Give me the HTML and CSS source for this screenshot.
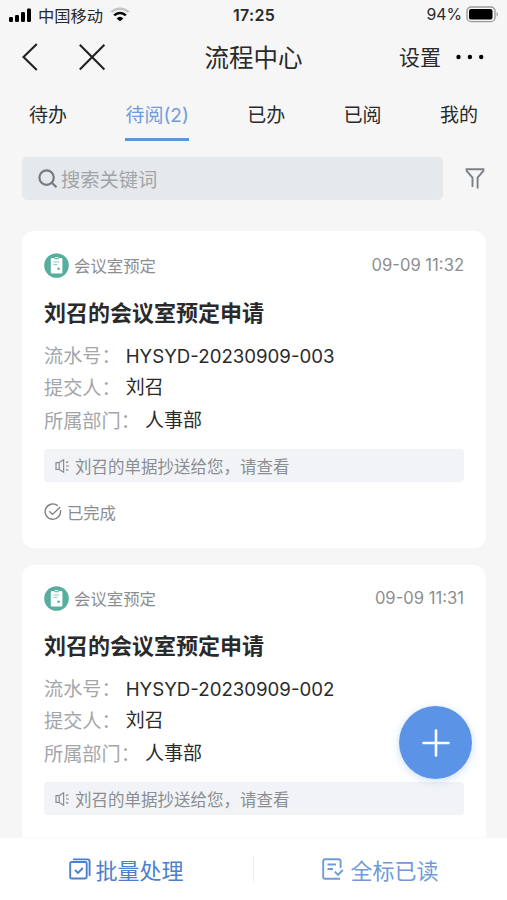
FILE: index.html
```html
<!DOCTYPE html>
<html lang="zh-CN">
<head>
  <meta charset="UTF-8" />
  <meta name="viewport" content="width=device-width, initial-scale=1.0" />
  <title>流程中心</title>
  <link rel="stylesheet" href="styles.css">
</head>

<body>
  <!-- Status Bar -->
  <div class="status-bar">
    <div class="carrier">
      <svg width="23" height="16" viewBox="0 0 23 16">
        <rect x="0" y="10" width="4" height="5" rx="1.2"/>
        <rect x="6" y="8" width="4" height="7" rx="1.2"/>
        <rect x="12" y="5" width="4" height="10" rx="1.2"/>
        <rect x="18" y="1.5" width="4" height="13.5" rx="1.2"/>
      </svg>
      <span class="carrier-name">中国移动</span>
      <svg class="wifi" width="20" height="15" viewBox="0 0 20 15" fill="none" stroke-width="2.5">
        <path d="M1.3 5.2a12.4 12.4 0 0 1 17.4 0" stroke="#c4c4c4"/>
        <path d="M4.2 8.4a8.3 8.3 0 0 1 11.6 0" stroke="#000"/>
        <path d="M10 14.3 6.6 11.4a5 5 0 0 1 6.8 0z" fill="#000"/>
      </svg>
    </div>
    <span class="clock">17:25</span>
    <div class="battery">
      <span>94%</span>
      <svg width="33" height="17" viewBox="0 0 33 17">
        <rect x="1" y="1" width="28" height="14.6" rx="4.2" fill="none" stroke="#9b9b9b" stroke-width="1.4"/>
        <rect x="3" y="3" width="23.5" height="10.6" rx="2.2"/>
        <path d="M30.6 6v4.6c1.7-.6 1.7-4 0-4.6z" fill="#9b9b9b"/>
      </svg>
    </div>
  </div>

  <!-- Navigation Bar -->
  <header class="nav">
    <div class="nav-left">
      <svg width="16" height="28" viewBox="0 0 16 28"><path d="M14.8 1 1.5 14l13.3 13"/></svg>
      <svg width="28" height="28" viewBox="0 0 28 28"><path d="M1.8 1.8l24.6 24.6M26.4 1.8 1.8 26.4"/></svg>
    </div>
    <h1>流程中心</h1>
    <div class="nav-right">
      <span>设置</span>
      <svg width="28" height="6" viewBox="0 0 28 6">
        <circle cx="2.5" cy="3" r="2.2"/>
        <circle cx="13.9" cy="3" r="2.2"/>
        <circle cx="25.2" cy="3" r="2.2"/>
      </svg>
    </div>
  </header>

  <nav class="tabs">
    <a class="tab">待办</a>
    <a class="tab active">待阅(2)</a>
    <a class="tab">已办</a>
    <a class="tab">已阅</a>
    <a class="tab">我的</a>
  </nav>

  <!-- Search -->
  <div class="search">
    <div class="search-box">
      <svg width="20" height="20" viewBox="0 0 20 20">
        <circle cx="8.6" cy="8.6" r="7.2"/>
        <path d="M13.8 13.8l4.7 4.5"/>
      </svg>
      <span>搜索关键词</span>
    </div>
    <svg class="filter" width="20" height="22" viewBox="0 0 20 22">
      <path d="M7.5 19.1V9.7L1.6 2.8V1.3h16.8v1.5l-5.8 6.9v10.8"/>
    </svg>
  </div>

  <!-- Process List -->
  <main class="list">
    <article class="card">
      <div class="card-head">
        <svg class="type-icon" width="25" height="25" viewBox="0 0 25 25">
          <circle cx="12.5" cy="12.5" r="12.3" fill="#56ae9f"/>
          <path d="M8 5h2.2l.6 1.3h3.6L15 5h2.200a1.200 1.200 0 0 1 1.200 1.200v13a1.200 1.200 0 0 1-1.200 1.200H8a1.200 1.200 0 0 1-1.200-1.200v-13A1.200 1.200 0 0 1 8 5z" fill="#fff"/>
          <path d="M11 4.600h3.200" stroke="#fff" stroke-width="1.2"/>
          <path d="M9.400 9h6M9.400 11.600h4" stroke="#8cc8be" stroke-width="1"/>
          <circle cx="14.6" cy="15.8" r="1.3" fill="#56ae9f"/>
        </svg>
        <span class="type">会议室预定</span>
        <time>09-09 11:32</time>
      </div>
      <h2>刘召的会议室预定申请</h2>
      <dl>
        <div><dt>流水号：</dt><dd class="serial">HYSYD-20230909-003</dd></div>
        <div><dt>提交人：</dt><dd>刘召</dd></div>
        <div><dt>所属部门：</dt><dd>人事部</dd></div>
      </dl>
      <p class="notice">
        <svg width="15" height="16" viewBox="0 0 15 16">
          <path d="M1 4.600h3.200L8.600 1.800v12.400l-4.400-2.800H1zM4.200 4.600v6.800M11 4.600l2.300-1M11 8h3M11 11.400l2.300 1"/>
        </svg>
        <span>刘召的单据抄送给您，请查看</span>
      </p>
      <div class="state">
        <svg width="18" height="18" viewBox="0 0 18 18">
          <path d="M16.400 7.200A7.700 7.700 0 1 1 13.600 2.600M5.200 8.200l3.300 3.200 7.700-7.300"/>
        </svg>
        <span>已完成</span>
      </div>
    </article>

    <article class="card">
      <div class="card-head">
        <svg class="type-icon" width="25" height="25" viewBox="0 0 25 25">
          <circle cx="12.5" cy="12.5" r="12.3" fill="#56ae9f"/>
          <path d="M8 5h2.200l.6 1.300h3.600L15 5h2.200a1.200 1.200 0 0 1 1.200 1.200v13a1.200 1.200 0 0 1-1.200 1.200H8a1.200 1.200 0 0 1-1.200-1.200v-13A1.200 1.200 0 0 1 8 5z" fill="#fff"/>
          <path d="M11 4.600h3.200" stroke="#fff" stroke-width="1.2"/>
          <path d="M9.400 9h6M9.400 11.600h4" stroke="#8cc8be" stroke-width="1"/>
          <circle cx="14.6" cy="15.8" r="1.3" fill="#56ae9f"/>
        </svg>
        <span class="type">会议室预定</span>
        <time>09-09 11:31</time>
      </div>
      <h2>刘召的会议室预定申请</h2>
      <dl>
        <div><dt>流水号：</dt><dd class="serial">HYSYD-20230909-002</dd></div>
        <div><dt>提交人：</dt><dd>刘召</dd></div>
        <div><dt>所属部门：</dt><dd>人事部</dd></div>
      </dl>
      <p class="notice">
        <svg width="15" height="16" viewBox="0 0 15 16">
          <path d="M1 4.600h3.200L8.600 1.800v12.400l-4.400-2.800H1zM4.200 4.600v6.800M11 4.600l2.300-1M11 8h3M11 11.400l2.300 1"/>
        </svg>
        <span>刘召的单据抄送给您，请查看</span>
      </p>
    </article>
  </main>

  <button class="add" aria-label="新建">
    <svg width="28" height="28" viewBox="0 0 28 28"><path d="M14 1.500v25M1.500 14h25"/></svg>
  </button>

  <!-- Bottom Actions -->
  <footer class="actions">
    <a class="action batch">
      <svg width="22" height="22" viewBox="0 0 22 22">
        <rect x="1.200" y="4" width="16.500" height="16.500" rx="1.500"/>
        <path d="M4 1.400h14.600a2 2 0 0 1 2 2V18M6 12l3 3 4.800-5"/>
      </svg>
      <span>批量处理</span>
    </a>
    <a class="action read">
      <svg width="22" height="22" viewBox="0 0 22 22">
        <path d="M18.600 10V3a1.800 1.800 0 0 0-1.800-1.800H3A1.800 1.800 0 0 0 1.200 3v16A1.800 1.800 0 0 0 3 20.800h15M5.500 6.500h8.500M5.500 11h5.500M12.800 13.600l3.200 3.200 4.800-4.800"/>
      </svg>
      <span>全标已读</span>
    </a>
  </footer>
</body>

</html>
```
FILE: styles.css
```css
:root {
  --bg: #f6f6f6;
  --blue: #5b94e6;
  --text: #2a2a2a;
  --gray: #8b8e91;
}

* {
  margin: 0;
  padding: 0;
  box-sizing: border-box;
}

body {
  display: flex;
  flex-direction: column;
  height: 900px;
  overflow: hidden;
  background: var(--bg);
  color: var(--text);
  font-family: Inter, "Noto Sans CJK SC", sans-serif;
}

svg {
  display: block;
  flex: none;
}

.status-bar {
  display: grid;
  grid-template-columns: 1fr auto 1fr;
  align-items: center;
  height: 30px;
  padding: 0 8px 1px 9px;
  font-size: 16px;
}

.carrier {
  display: flex;
  align-items: center;
}

.carrier-name {
  margin: 0 7px 0 6px;
  font-size: 16.3px;
}

.clock {
  font-weight: 600;
  letter-spacing: 0.3px;
}

.battery {
  display: flex;
  justify-content: flex-end;
  align-items: center;
  gap: 4px;
  font-size: 15.8px;
}

.nav {
  display: grid;
  grid-template-columns: 1fr auto 1fr;
  align-items: center;
  height: 56px;
  padding: 0 23px 2px 22px;
}

.nav-left {
  display: flex;
  align-items: center;
  gap: 40px;
  fill: none;
  stroke: #222;
  stroke-width: 2.1;
}

.nav h1 {
  padding: 0 0 2px 1px;
  font-size: 24.5px;
  font-weight: 400;
}

.nav-right {
  display: flex;
  justify-content: flex-end;
  align-items: center;
  gap: 15px;
  font-size: 21px;
}

.nav-right span {
  padding-bottom: 2px;
}

.tabs {
  display: flex;
  justify-content: space-between;
  height: 55px;
  padding: 0 29px;
  font-size: 19px;
  line-height: 59px;
}

.tab.active {
  color: #6f9bd8;
  border-bottom: 3px solid #6394d6;
}

.search {
  display: flex;
  align-items: center;
  gap: 22px;
  margin-top: 16px;
  padding: 0 22px;
}

.search-box {
  display: flex;
  flex: 1;
  align-items: center;
  gap: 3px;
  height: 43px;
  padding-left: 16px;
  border-radius: 5px;
  background: #e5e9ec;
  color: #a1a5a9;
  font-size: 19.3px;
}

.search-box svg {
  fill: none;
  stroke: #737b82;
  stroke-width: 2.2;
}

.filter {
  fill: none;
  stroke: #7d8185;
  stroke-width: 1.9;
}

.list {
  display: flex;
  flex: 1;
  flex-direction: column;
  gap: 17px;
  min-height: 0;
  margin-top: 31px;
  padding: 0 21.5px 0 22px;
  overflow: hidden;
}

.card {
  flex: none;
  height: 317px;
  padding: 22px 21.5px 0 22px;
  border-radius: 12px;
  background: #fff;
}

.card + .card {
  padding-top: 21px;
}

.card-head {
  display: flex;
  align-items: center;
  height: 24px;
  color: var(--gray);
  font-size: 16.4px;
}

.type {
  margin-left: 5px;
}

.card-head time {
  margin-left: auto;
  font-size: 16.6px;
}

.card h2 {
  margin-top: 20px;
  font-size: 22px;
  font-weight: 700;
  line-height: 32px;
}

.card dl {
  margin-top: 11px;
  font-size: 19.2px;
  line-height: 32.4px;
}

.card dl div {
  display: flex;
  gap: 5px;
}

.card dt {
  color: #a3a6a9;
}

.card dd {
  font-size: 19px;
}

.card .serial {
  font-size: 18.65px;
}

.notice {
  display: flex;
  align-items: center;
  gap: 5px;
  height: 33px;
  margin-top: 12px;
  padding-left: 11px;
  border-radius: 4px;
  background: #f1f3f6;
  color: var(--gray);
  font-size: 16.5px;
}

.notice svg {
  fill: none;
  stroke: #8b8e91;
  stroke-width: 1.2;
}

.state {
  display: flex;
  align-items: center;
  gap: 5px;
  height: 24px;
  margin-top: 18px;
  color: var(--gray);
  font-size: 16.3px;
}

.state svg {
  fill: none;
  stroke: #7d8083;
  stroke-width: 1.4;
}

.add {
  position: fixed;
  top: 706px;
  right: 35px;
  display: flex;
  justify-content: center;
  align-items: center;
  width: 73px;
  height: 73px;
  border: none;
  border-radius: 50%;
  background: var(--blue);
  box-shadow: 0 2px 9px rgba(91, 148, 230, 0.3);
}

.add svg {
  fill: none;
  stroke: #fff;
  stroke-width: 2.6;
  stroke-linecap: round;
}

.actions {
  display: flex;
  flex: none;
  align-items: center;
  height: 63px;
  border-top: 1px solid #f9f9f9;
  background: #fff;
  font-size: 22px;
}

.action {
  display: flex;
  flex: 1;
  justify-content: center;
  align-items: center;
  gap: 4px;
  height: 26px;
}

.action svg {
  fill: none;
  stroke: currentColor;
  stroke-width: 1.9;
}

.batch {
  border-right: 1px solid #eee;
  color: #4c7fd0;
}

.read {
  gap: 6px;
  color: #709bd9;
}
```
